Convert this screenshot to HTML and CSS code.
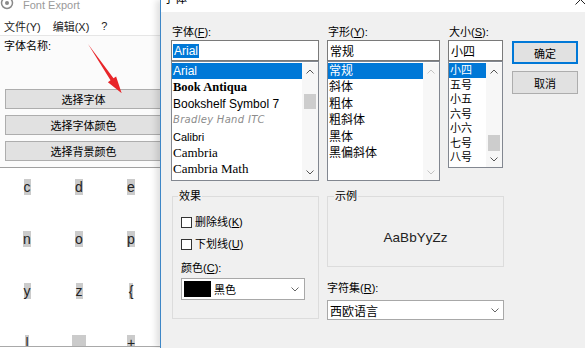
FILE: index.html
```html
<!DOCTYPE html>
<html>
<head>
  <title>Font Export</title>
  <link rel="stylesheet" href="styles.css">
</head>
<body>
  <div class="screen">
    <div class="app">
      <div class="app-title">
        <svg class="app-icon" width="14" height="14" viewBox="0 0 14 14"><circle cx="7" cy="7" r="5.5" fill="none" stroke="#8a8a8a" stroke-width="1.5"/><circle cx="7" cy="7" r="2" fill="#8a8a8a"/></svg>
        <span>Font Export</span>
      </div>
      <div class="menu">
        <span>文件(Y)</span>
        <span>编辑(X)</span>
        <span>?</span>
      </div>
      <div class="app-body">
        <div class="name-label">字体名称:</div>
        <div class="app-buttons">
          <button class="btn wide">选择字体</button>
          <button class="btn wide">选择字体颜色</button>
          <button class="btn wide">选择背景颜色</button>
        </div>
      </div>
      <div class="char-grid">
        <div class="cell"><span>c</span></div>
        <div class="cell"><span>d</span></div>
        <div class="cell"><span>e</span></div>
        <div class="cell"><span>n</span></div>
        <div class="cell"><span>o</span></div>
        <div class="cell"><span>p</span></div>
        <div class="cell"><span>y</span></div>
        <div class="cell"><span>z</span></div>
        <div class="cell"><span>{</span></div>
        <div class="cell"><span>|</span></div>
        <div class="cell"><span class="under">_</span></div>
        <div class="cell"><span>+</span></div>
      </div>
    </div>

    <div class="dialog">
      <div class="dlg-title">
        <span>字体</span>
        <svg class="dlg-close" width="11" height="11" viewBox="0 0 11 11"><path d="M0.5 0.5 L10.5 10.5 M10.5 0.5 L0.5 10.5" stroke="#222" stroke-width="1" fill="none"/></svg>
      </div>
      <div class="dlg-body">
        <div class="top-row">
          <div class="field f-font">
            <label>字体(<u>F</u>):</label>
            <div class="input"><span class="sel latin">Arial</span></div>
            <div class="list font-list">
              <div class="items">
                <div class="item on latin">Arial</div>
                <div class="item antiqua">Book Antiqua</div>
                <div class="item latin">Bookshelf Symbol 7</div>
                <div class="item bradley">Bradley Hand ITC</div>
                <div class="item calibri">Calibri</div>
                <div class="item cambria">Cambria</div>
                <div class="item cambria">Cambria Math</div>
              </div>
              <div class="scroll">
                <div class="arr"><svg width="8" height="5" viewBox="0 0 8 5"><path d="M0.5 4.5 L4 1 L7.5 4.5" fill="none" stroke="#555"/></svg></div>
                <div class="track"><div class="thumb font-thumb"></div></div>
                <div class="arr"><svg width="8" height="5" viewBox="0 0 8 5"><path d="M0.5 0.5 L4 4 L7.5 0.5" fill="none" stroke="#555"/></svg></div>
              </div>
            </div>
          </div>

          <div class="field f-style">
            <label>字形(<u>Y</u>):</label>
            <div class="input cjk">常规</div>
            <div class="list style-list">
              <div class="items">
                <div class="item on">常规</div>
                <div class="item">斜体</div>
                <div class="item">粗体</div>
                <div class="item">粗斜体</div>
                <div class="item">黑体</div>
                <div class="item">黑偏斜体</div>
              </div>
              <div class="scroll">
                <div class="arr"><svg width="8" height="5" viewBox="0 0 8 5"><path d="M0.5 4.5 L4 1 L7.5 4.5" fill="none" stroke="#c4c4c4"/></svg></div>
                <div class="track"></div>
                <div class="arr"><svg width="8" height="5" viewBox="0 0 8 5"><path d="M0.5 0.5 L4 4 L7.5 0.5" fill="none" stroke="#c4c4c4"/></svg></div>
              </div>
            </div>
          </div>

          <div class="field f-size">
            <label>大小(<u>S</u>):</label>
            <div class="input cjk">小四</div>
            <div class="list size-list">
              <div class="items">
                <div class="item on">小四</div>
                <div class="item">五号</div>
                <div class="item">小五</div>
                <div class="item">六号</div>
                <div class="item">小六</div>
                <div class="item">七号</div>
                <div class="item">八号</div>
              </div>
              <div class="scroll">
                <div class="arr"><svg width="8" height="5" viewBox="0 0 8 5"><path d="M0.5 4.5 L4 1 L7.5 4.5" fill="none" stroke="#555"/></svg></div>
                <div class="track"><div class="thumb size-thumb"></div></div>
                <div class="arr"><svg width="8" height="5" viewBox="0 0 8 5"><path d="M0.5 0.5 L4 4 L7.5 0.5" fill="none" stroke="#555"/></svg></div>
              </div>
            </div>
          </div>

          <div class="actions">
            <button class="btn dlg-btn primary">确定</button>
            <button class="btn dlg-btn">取消</button>
          </div>
        </div>

        <div class="bottom-row">
          <fieldset class="group effects">
            <legend>效果</legend>
            <div class="check first"><span class="box"></span><span>删除线(<u>K</u>)</span></div>
            <div class="check second"><span class="box"></span><span>下划线(<u>U</u>)</span></div>
            <div class="color-label">颜色(<u>C</u>):</div>
            <div class="combo color-combo">
              <span class="swatch"></span>
              <span>黑色</span>
              <svg class="chev" width="8" height="5" viewBox="0 0 8 5"><path d="M0.5 0.5 L4 4 L7.5 0.5" fill="none" stroke="#666"/></svg>
            </div>
          </fieldset>

          <div class="right-col">
            <fieldset class="group sample">
              <legend>示例</legend>
              <div class="sample-text">AaBbYyZz</div>
            </fieldset>
            <div class="charset-label">字符集(<u>R</u>):</div>
            <div class="combo charset">
              <span>西欧语言</span>
              <svg class="chev" width="8" height="5" viewBox="0 0 8 5"><path d="M0.5 0.5 L4 4 L7.5 0.5" fill="none" stroke="#666"/></svg>
            </div>
          </div>
        </div>
      </div>
    </div>

    <svg class="arrow" width="585" height="348" viewBox="0 0 585 348">
      <polygon points="88,44 113.5,78.3 116.1,76.5 121.7,93.3 107.9,82.2 110.5,80.3" fill="#e8262a"/>
    </svg>
  </div>
</body>
</html>
```

FILE: styles.css
```css
* {
  margin: 0;
  padding: 0;
  box-sizing: border-box;
}

body {
  width: 585px;
  height: 348px;
  overflow: hidden;
  font-family: "Liberation Sans", "Noto Sans CJK SC", sans-serif;
  font-size: 11px;
  color: #000;
  background: #fff;
}

.screen {
  position: relative;
  display: flex;
  height: 348px;
}

/* left window */
.app {
  width: 160px;
  flex: none;
  height: 347px;
  display: flex;
  flex-direction: column;
  overflow: hidden;
  background: #fff;
  border-bottom: 1px solid #a9a9a9;
}

.app > div {
  flex-shrink: 0;
}

.app-title {
  height: 16px;
  display: flex;
  align-items: flex-start;
  gap: 9px;
  color: #9a9a9a;
  font-size: 11px;
  line-height: 11px;
  overflow: hidden;
}

.app-icon {
  margin-top: -4px;
}

.menu {
  height: 20px;
  display: flex;
  align-items: center;
  gap: 12px;
  padding: 0 4px;
  border-bottom: 1px solid #e6e6e6;
  color: #222;
}

.app-body {
  padding: 3px 0 6px 5px;
  background: #fbfbfb;
  border-bottom: 1px solid #a0a0a0;
}

.name-label {
  line-height: 14px;
  margin-left: -1px;
}

.app-buttons {
  margin-top: 36px;
  display: flex;
  flex-direction: column;
  gap: 6px;
}

.btn {
  font-family: "Liberation Sans", "Noto Sans CJK SC", sans-serif;
  font-size: 11px;
  color: #000;
  background: #e1e1e1;
  border: 1px solid #adadad;
}

.btn.wide {
  width: 157px;
  height: 20px;
}

.char-grid {
  display: grid;
  grid-template-columns: repeat(3, 52px);
  grid-auto-rows: 52px;
  padding: 11px 0 0 1px;
  justify-items: center;
  align-items: start;
  background: #fff;
}

.cell span {
  font-size: 14px;
  line-height: 16px;
  background: #cbcbcb;
  color: #222;
}

.cell .under {
  padding: 0 3px;
}

/* font dialog */
.dialog {
  position: relative;
  z-index: 1;
  flex: 1;
  display: flex;
  flex-direction: column;
  background: #f0f0f0;
  border-left: 1px solid #3d86c6;
  box-shadow: -4px 0 6px rgba(0, 0, 0, 0.12);
}

.dlg-title {
  height: 12px;
  flex: none;
  display: flex;
  justify-content: space-between;
  align-items: flex-start;
  padding-left: 2px;
  background: #fff;
  overflow: hidden;
}

.dlg-title span {
  font-size: 12px;
  line-height: 12px;
  margin-top: -7px;
}

.dlg-close {
  margin-top: -6px;
  margin-right: -1px;
}

.dlg-body {
  padding: 13px 0 0 10px;
}

.top-row {
  display: flex;
  gap: 8px;
  align-items: flex-start;
}

.field {
  display: flex;
  flex-direction: column;
}

.field label {
  line-height: 14px;
  padding-left: 1px;
  margin-bottom: 1px;
}

.f-font { width: 148px; }
.f-style { width: 113px; }
.f-size { width: 55px; }

.input {
  height: 21px;
  display: flex;
  align-items: center;
  padding-left: 1px;
  border: 1px solid #7a7a7a;
  background: #fff;
  font-size: 12px;
}

.input.cjk {
  padding-left: 2px;
}

.sel {
  background: #0078d7;
  color: #fff;
  line-height: 14px;
  padding: 0 1px;
}

.latin {
  font-family: "Liberation Sans", sans-serif;
  font-size: 12px;
}

.list {
  display: flex;
  padding-top: 1px;
  border: 1px solid #828790;
  background: #fff;
}

.font-list,
.style-list {
  height: 120px;
}

.size-list {
  height: 107px;
}

.items {
  flex: 1;
  overflow: hidden;
}

.item {
  height: 16.4px;
  line-height: 16px;
  padding-left: 1px;
  white-space: nowrap;
  font-size: 12px;
}

.size-list .item {
  height: 14.5px;
  line-height: 14px;
  font-size: 11px;
}

.item.on {
  background: #0078d7;
  color: #fff;
}

.antiqua {
  font-family: "Liberation Serif", serif;
  font-weight: bold;
  font-size: 12.5px;
}

.bradley {
  font-family: "DejaVu Sans", sans-serif;
  font-style: italic;
  font-size: 10px;
  color: #8c8c8c;
  letter-spacing: 0.3px;
}

.calibri {
  font-family: "Liberation Sans", sans-serif;
  font-size: 11px;
}

.cambria {
  font-family: "Liberation Serif", serif;
  font-size: 13px;
}

.scroll {
  width: 16px;
  flex: none;
  display: flex;
  flex-direction: column;
  background: #f7f7f7;
}

.arr {
  height: 16px;
  display: flex;
  align-items: center;
  justify-content: center;
}

.track {
  flex: 1;
  display: flex;
  flex-direction: column;
  align-items: center;
}

.thumb {
  width: 12px;
  background: #cdcdcd;
}

.font-thumb {
  margin-top: 15px;
  height: 15px;
}

.size-thumb {
  margin-top: auto;
  height: 16px;
}

.actions {
  width: 66px;
  margin-left: 1px;
  padding-top: 16px;
  display: flex;
  flex-direction: column;
  gap: 7px;
}

.dlg-btn {
  height: 23px;
}

.dlg-btn.primary {
  border: 2px solid #0078d7;
}

/* lower part */
.bottom-row {
  display: flex;
  gap: 8px;
  margin-top: 8px;
  padding-left: 1px;
}

.group {
  border: 1px solid #dcdcdc;
  min-width: 0;
}

.group legend {
  line-height: 14px;
  padding: 0 1px;
}

.effects {
  width: 147px;
  height: 130px;
  padding: 0 13px 0 8px;
}

.effects legend {
  margin-left: -3px;
}

.check {
  display: flex;
  align-items: center;
  gap: 3px;
  line-height: 14px;
}

.check.first { margin-top: 12px; }
.check.second { margin-top: 8px; }

.box {
  width: 11px;
  height: 11px;
  border: 1px solid #333;
  background: #fff;
}

.color-label {
  line-height: 14px;
  margin-top: 10px;
}

.combo {
  display: flex;
  align-items: center;
  border: 1px solid #a8a8a8;
  background: #fff;
}

.color-combo {
  height: 22px;
  margin-top: 3px;
  padding: 0 5px 0 2px;
}

.swatch {
  width: 27px;
  height: 16px;
  background: #000;
  margin-right: 3px;
}

.chev {
  margin-left: auto;
}

.right-col {
  width: 177px;
  display: flex;
  flex-direction: column;
}

.sample {
  padding: 0 6px;
}

.sample-text {
  font-family: "Liberation Sans", sans-serif;
  font-size: 13.5px;
  line-height: 16px;
  color: #222;
  text-align: center;
  padding: 27px 0 20px;
}

.charset-label {
  line-height: 14px;
  margin-top: 14px;
  margin-bottom: 5px;
}

.charset {
  height: 20px;
  padding: 0 4px 0 2px;
  font-size: 12px;
}

.arrow {
  position: absolute;
  left: 0;
  top: 0;
  pointer-events: none;
  z-index: 2;
}
```
